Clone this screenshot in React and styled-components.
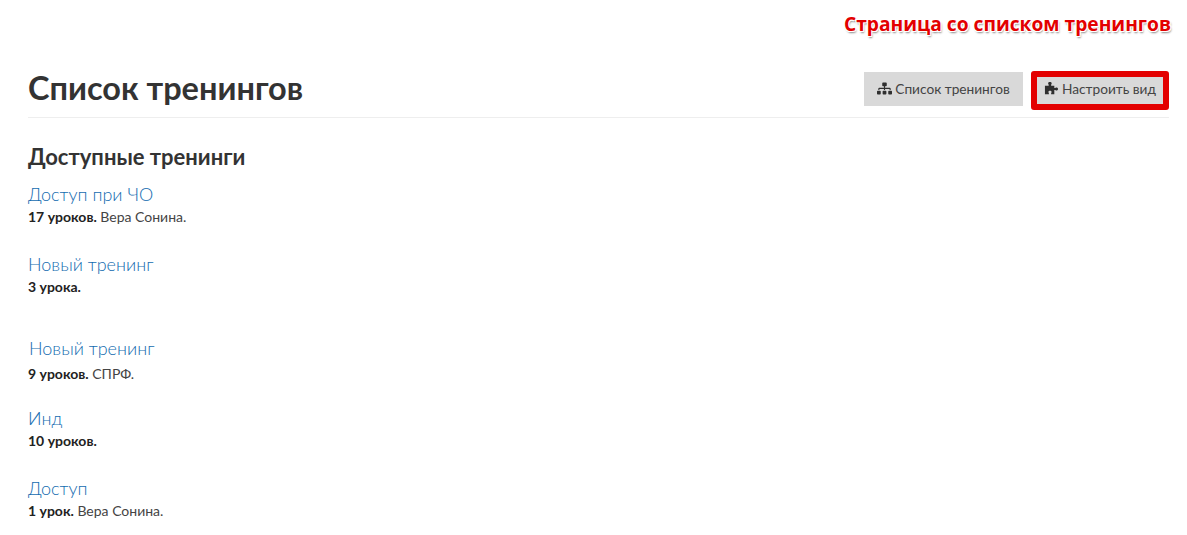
import styled, { createGlobalStyle } from "styled-components";
import { FaSitemap } from "react-icons/fa";

const GlobalStyle = createGlobalStyle`
  html, body {
    margin: 0;
    background: #fff;
  }
  body {
    font-family: "Lato", "Open Sans", "Liberation Sans", sans-serif;
    color: #333;
  }
`

const Page = styled.div`
  width: 1187px;
  height: 535px;
  overflow: hidden;
  box-sizing: border-box;
  padding: 0 18px 0 28px;
`

const Note = styled.div`
  height: 71px;
  box-sizing: border-box;
  padding-top: 11px;
  margin-right: -2px;
  text-align: right;
  font-family: "Open Sans", sans-serif;
  font-size: 19.2px;
  line-height: 26px;
  font-weight: 700;
  color: #e30000;
  text-shadow: 1px 1px 0 #fff, -1px -1px 0 #fff, 1px -1px 0 #fff, -1px 1px 0 #fff, 1px 2px 2px #888;
`

const Header = styled.div`
  display: flex;
  align-items: flex-start;
  justify-content: space-between;
  height: 46px;
  border-bottom: 1px solid #eee;
`

const Title = styled.h1`
  margin: -1px 0 0;
  font-size: 32.5px;
  line-height: 36px;
  font-weight: 700;
  color: #333;
`

const Buttons = styled.div`
  display: flex;
  align-items: flex-start;
  gap: 8px;
`

const Button = styled.button`
  display: flex;
  align-items: center;
  justify-content: center;
  gap: 3px;
  box-sizing: border-box;
  width: ${(p) => p.$width}px;
  height: ${(p) => (p.$marked ? 39 : 34)}px;
  margin-top: ${(p) => (p.$marked ? 0 : 1)}px;
  padding: 0 0 ${(p) => (p.$marked ? 4 : 2)}px;
  border: ${(p) => (p.$marked ? "6px solid #e30000" : "none")};
  border-radius: ${(p) => (p.$marked ? 3 : 0)}px;
  background: #d9d9d9;
  font-family: inherit;
  font-size: 13.7px;
  color: #444;
  svg {
    width: 15px;
    height: 15px;
    color: #2f2f2f;
  }
`

const SectionTitle = styled.h2`
  margin: 26px 0 0;
  font-size: 22px;
  line-height: 26px;
  font-weight: 700;
  color: #333;
`

const CourseList = styled.div`
  margin-top: 12px;
`

const Course = styled.div`
  height: ${(p) => p.$height}px;
  padding-left: ${(p) => p.$indent || 0}px;
`

const CourseLink = styled.a`
  display: block;
  font-size: 18px;
  line-height: 24px;
  font-weight: 300;
  color: #146cb0;
  text-decoration: none;
`

const Meta = styled.div`
  margin-top: ${(p) => p.$gap || 1}px;
  margin-left: ${(p) => -(p.$indent || 0)}px;
  font-size: 14px;
  line-height: 20px;
  color: #444;
  strong {
    font-weight: 700;
    color: #222;
  }
`

const PuzzleIcon = () => (
  <svg viewBox="0 0 16 16" fill="currentColor" aria-hidden="true">
    <path d="M1 5h4V4.2C5 3.6 4.4 3.4 4.4 2.4 4.4 1.5 5.3 1 6.3 1s1.9.5 1.9 1.4c0 1-.6 1.2-.6 1.8V5h3.4v2.4h.7c.5 0 .8-.5 1.6-.5.9 0 1.7.7 1.7 1.6s-.8 1.6-1.7 1.6c-.8 0-1.1-.5-1.6-.5H11V14H7.6v-1c0-.6.5-.8.5-1.4 0-.7-.8-1.2-1.7-1.2s-1.7.5-1.7 1.2c0 .6.5.8.5 1.4v1H1z" />
  </svg>
);

const courses = [
  { name: "Доступ при ЧО", lessons: "17 уроков.", author: "Вера Сонина.", height: 70 },
  { name: "Новый тренинг", lessons: "3 урока.", height: 84 },
  { name: "Новый тренинг", lessons: "9 уроков.", author: "СПРФ.", height: 70, indent: 1, gap: 4 },
  { name: "Инд", lessons: "10 уроков.", height: 70 },
  { name: "Доступ", lessons: "1 урок.", author: "Вера Сонина.", height: 50 },
];

const App = () => {
  return (
    <Page>
      <GlobalStyle />
      <Note>Страница со списком тренингов</Note>
      <Header>
        <Title>Список тренингов</Title>
        <Buttons>
          <Button $width={159}>
            <FaSitemap />
            Список тренингов
          </Button>
          <Button $width={138} $marked>
            <PuzzleIcon />
            Настроить вид
          </Button>
        </Buttons>
      </Header>
      <SectionTitle>Доступные тренинги</SectionTitle>
      <CourseList>
        {courses.map((course, i) => (
          <Course key={i} $height={course.height} $indent={course.indent}>
            <CourseLink href="#">{course.name}</CourseLink>
            <Meta $gap={course.gap} $indent={course.indent}>
              <strong>{course.lessons}</strong> {course.author}
            </Meta>
          </Course>
        ))}
      </CourseList>
    </Page>
  );
};

export default App;
